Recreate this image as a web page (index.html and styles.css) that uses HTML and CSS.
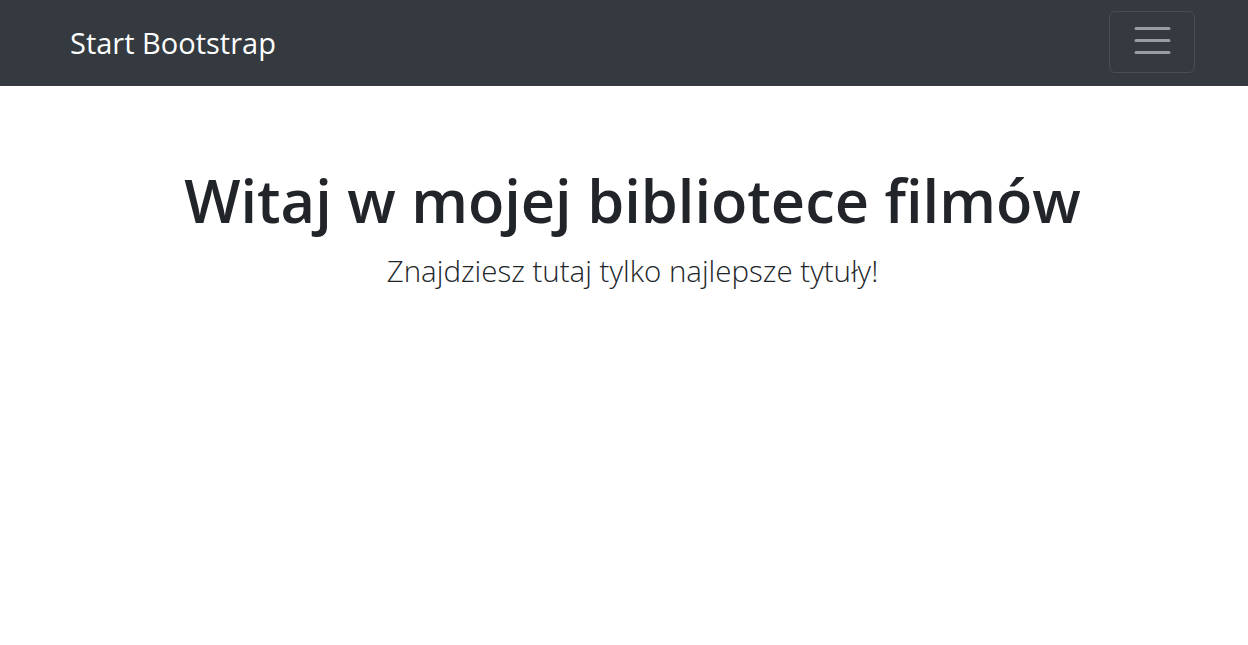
FILE: index.html
```html
<!DOCTYPE html>
<html lang="pl">
<head>
<meta charset="utf-8">
<title>Start Bootstrap</title>
<link rel="stylesheet" href="styles.css">
</head>
<body>
<nav class="navbar">
  <a class="brand" href="#">Start Bootstrap</a>
  <button class="toggler" type="button" aria-label="Toggle navigation">
    <svg class="toggler-icon" width="45" height="45" viewBox="0 0 30 30">
      <path d="M4 7h22M4 15h22M4 23h22" stroke="rgba(255,255,255,0.5)" stroke-width="2" stroke-linecap="round"/>
    </svg>
  </button>
</nav>
<main class="hero">
  <h1 class="title">Witaj w mojej bibliotece filmów</h1>
  <p class="lead">Znajdziesz tutaj tylko najlepsze tytuły!</p>
</main>
</body>
</html>
```

FILE: styles.css
```css
html, body {
  margin: 0;
  padding: 0;
  background: #fff;
  font-family: "Open Sans", "Noto Sans", sans-serif;
  color: #212529;
}

.navbar {
  display: flex;
  align-items: center;
  justify-content: space-between;
  height: 86px;
  padding: 0 53px 0 70px;
  background: #343a40;
  box-sizing: border-box;
}

.brand {
  color: #fff;
  text-decoration: none;
  font-size: 29px;
  line-height: 1;
  font-weight: 400;
  margin-top: -2px;
}

.toggler {
  width: 86px;
  height: 62px;
  display: flex;
  align-items: center;
  justify-content: center;
  padding: 0;
  background: transparent;
  border: 1px solid rgba(255, 255, 255, 0.1);
  border-radius: 6px;
  margin-top: -3px;
}

.toggler-icon {
  display: block;
  margin-top: -2px;
}

.hero {
  text-align: center;
  padding: 78px 0 0 17px;
}

.title {
  margin: 0;
  font-size: 59.5px;
  font-weight: 600;
  line-height: 1.2;
}

.lead {
  margin: 14px 0 0;
  font-size: 29.5px;
  font-weight: 300;
  line-height: 1.5;
}
```
